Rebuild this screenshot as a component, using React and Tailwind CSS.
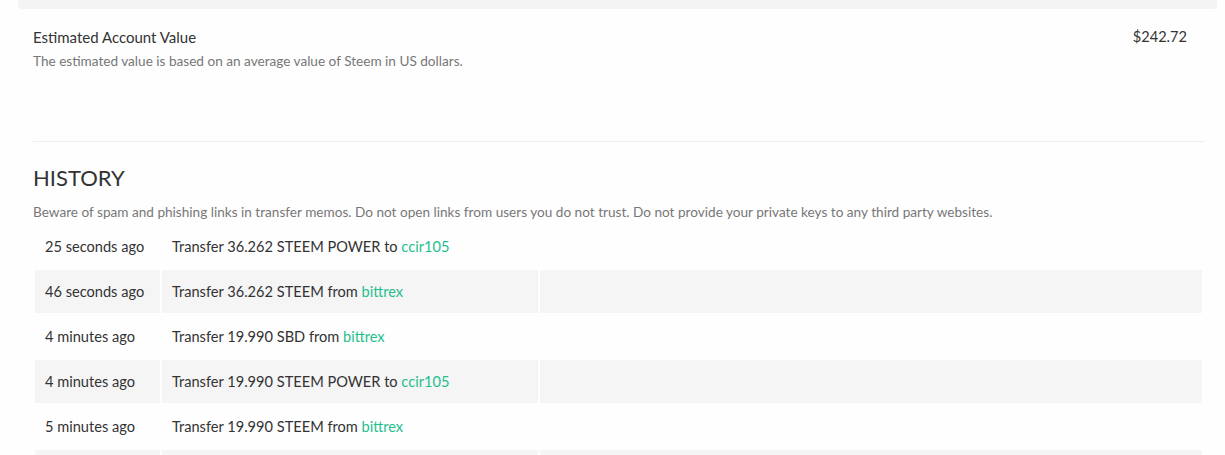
import React from 'react';

const HISTORY = [
  { when: '25 seconds ago', text: 'Transfer 36.262 STEEM POWER to ', who: 'ccir105' },
  { when: '46 seconds ago', text: 'Transfer 36.262 STEEM from ', who: 'bittrex' },
  { when: '4 minutes ago', text: 'Transfer 19.990 SBD from ', who: 'bittrex' },
  { when: '4 minutes ago', text: 'Transfer 19.990 STEEM POWER to ', who: 'ccir105' },
  { when: '5 minutes ago', text: 'Transfer 19.990 STEEM from ', who: 'bittrex' },
];

const App = () => {
  return (
    <div className="w-[1225px] h-[455px] overflow-hidden bg-[#fefefe] text-[#333] font-['Lato',sans-serif]">
      {/* top balance strip */}
      <div className="mx-[18px] w-[1199px] h-[9px] bg-[#f4f4f4] rounded-b-sm"></div>

      <div className="pl-[33px] pr-[20px]">
        {/* Estimated value */}
        <div className="flex justify-between pt-[19px] pr-[18px]">
          <div>
            <div className="text-[15px] leading-[18px]">Estimated Account Value</div>
            <div className="text-[13.6px] leading-[17px] text-[#777] mt-[7px]">
              The estimated value is based on an average value of Steem in US dollars.
            </div>
          </div>
          <div className="text-[14.6px] leading-[18px]">$242.72</div>
        </div>

        <div className="h-px bg-[#eee] mt-[71px]"></div>

        {/* History */}
        <h2 className="text-[22px] leading-[28px] mt-[22px] text-[#333]">HISTORY</h2>
        <p className="text-[13.6px] leading-[17px] text-[#777] mt-[12px]">
          Beware of spam and phishing links in transfer memos. Do not open links from users you do not trust. Do not provide your private keys to any third party websites.
        </p>

        <table className="mt-[2px] border-separate border-spacing-[2px] w-[1171px] text-[14.6px]">
          <tbody>
            {HISTORY.map((row, i) => (
              <tr key={i} className={i % 2 === 1 ? 'bg-[#f5f5f5]' : ''}>
                <td className="w-[125px] h-[43px] pl-[10px] whitespace-nowrap">{row.when}</td>
                <td className="w-[376px] h-[43px] pl-[10px] whitespace-nowrap">
                  {row.text}
                  <a className="text-[#1fbf8f]">{row.who}</a>
                </td>
                <td className="h-[43px]"></td>
              </tr>
            ))}
            <tr className="bg-[#f5f5f5]">
              <td className="w-[125px] h-[43px]"></td>
              <td className="w-[376px] h-[43px]"></td>
              <td className="h-[43px]"></td>
            </tr>
          </tbody>
        </table>
      </div>
    </div>
  );
};

export default App;
